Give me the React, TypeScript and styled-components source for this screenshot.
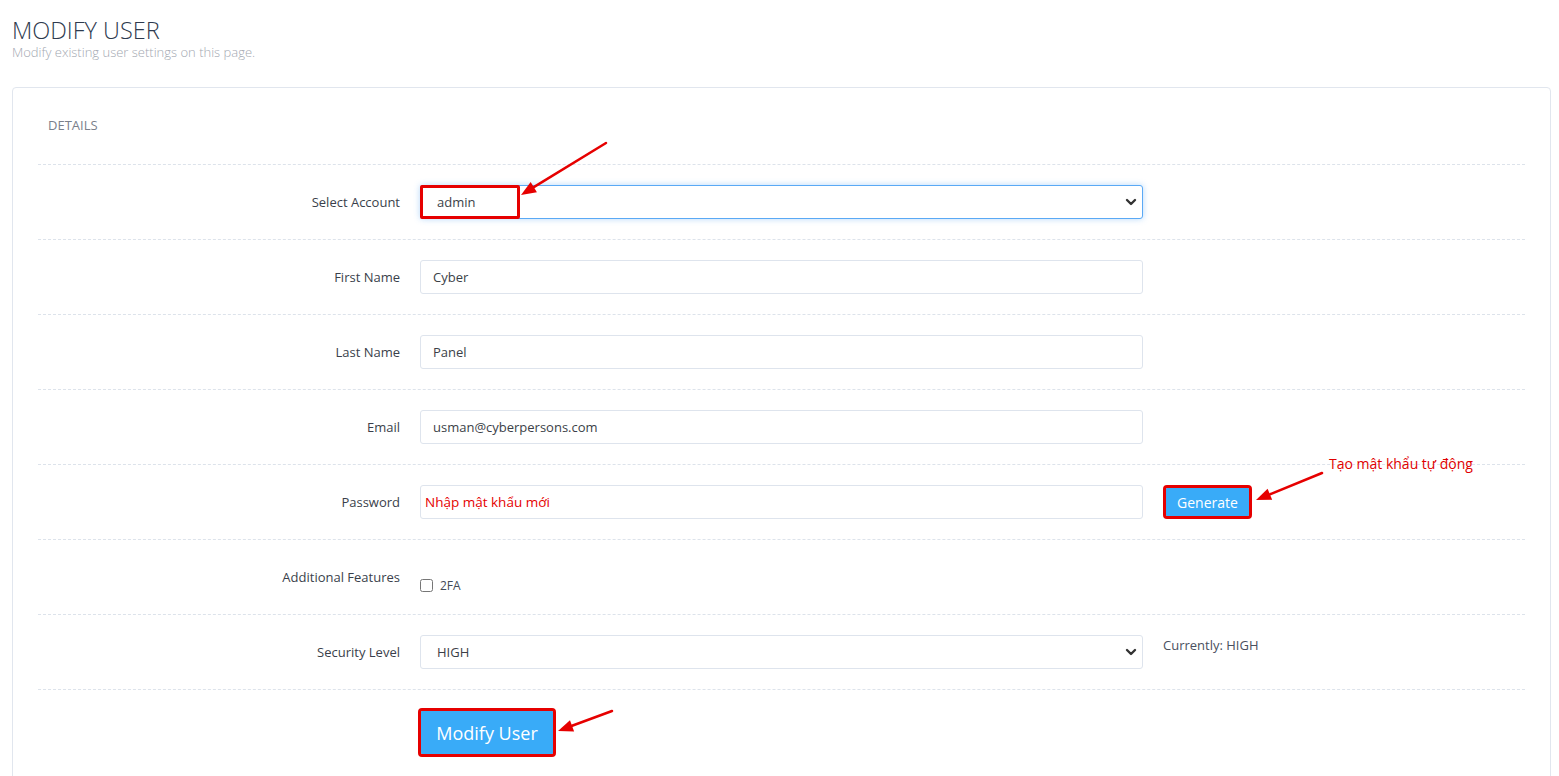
import React from "react";
import styled, { createGlobalStyle } from "styled-components";

const Global = createGlobalStyle`
  html, body { margin: 0; padding: 0; overflow: hidden; background: #fff; }
  body { font-family: "Open Sans", "Noto Sans", sans-serif; }
  * { box-sizing: border-box; }
`;

const Page = styled.div`
  position: relative;
  padding: 0 8px 0 12px;
  width: 1559px;
  height: 776px;
  overflow: hidden;
`;

const Header = styled.header`
  padding-top: 17px;
  height: 87px;
`;

const Title = styled.h1`
  margin: 0;
  font-family: "Open Sans", sans-serif;
  font-weight: 300;
  font-size: 23.5px;
  line-height: 27px;
  color: #2e3a4e;
`;

const Subtitle = styled.p`
  margin: 0;
  font-weight: 300;
  font-size: 13px;
  line-height: 16px;
  color: #a3a8b1;
`;

const Card = styled.section`
  border: 1px solid #e1e6ee;
  border-radius: 4px;
  padding: 0 25px 40px;
`;

const CardTitle = styled.div`
  padding: 29px 10px 31px;
  font-size: 13px;
  line-height: 16px;
  color: #7a808b;
  font-weight: 400;
`;

const Row = styled.div`
  display: grid;
  grid-template-columns: 362px 723px 1fr;
  column-gap: 20px;
  border-top: 1px dashed #dde3eb;
  padding: 20px 0;
  min-height: 75px;
`;

const Label = styled.label`
  text-align: right;
  font-size: 13px;
  font-weight: 500;
  line-height: 34px;
  color: #3a3f4b;
`;

const Field = styled.div`
  position: relative;
`;

const TextInput = styled.input<{ $annot?: boolean }>`
  width: 100%;
  height: 34px;
  border: 1px solid #dee4ed;
  border-radius: 3px;
  padding: 0 ${(p) => (p.$annot ? 4 : 12)}px;
  font-family: "Open Sans", sans-serif;
  font-size: ${(p) => (p.$annot ? 13.5 : 13)}px;
  color: ${(p) => (p.$annot ? "#e50000" : "#3b3f48")};
  outline: none;
  &::placeholder { color: #e50000; opacity: 1; }
`;

const SelectBox = styled.select<{ $focus?: boolean }>`
  width: 100%;
  height: 34px;
  appearance: none;
  border: 1px solid ${(p) => (p.$focus ? "#5aa9f5" : "#dee4ed")};
  box-shadow: ${(p) => (p.$focus ? "0 0 6px rgba(90,169,245,0.45)" : "none")};
  border-radius: 3px;
  padding: 0 16px;
  font-family: "Open Sans", sans-serif;
  font-size: 13px;
  color: #3b3f48;
  background: #fff;
  outline: none;
`;

const Chevron = styled.svg`
  position: absolute;
  right: 6px;
  top: 12px;
  pointer-events: none;
`;

const Highlight = styled.div<{ $w: number }>`
  position: absolute;
  left: 0;
  top: 0;
  width: ${(p) => p.$w}px;
  height: 34px;
  border: 3px solid #e60000;
  border-radius: 2px;
  pointer-events: none;
`;

const Side = styled.div`
  font-size: 13px;
  line-height: 20px;
  color: #4a5060;
`;

const Button = styled.button<{ $big?: boolean }>`
  background: #39abf8;
  color: #fff;
  border: none;
  border-radius: 1px;
  outline: 3px solid #e60000;
  font-family: "Open Sans", sans-serif;
  font-size: ${(p) => (p.$big ? 18 : 14)}px;
  width: ${(p) => (p.$big ? 132 : 83)}px;
  height: ${(p) => (p.$big ? 43 : 28)}px;
  margin: ${(p) => (p.$big ? "1px 0 0 1px" : "3px 0 0 3px")};
  padding: 0;
  cursor: pointer;
`;

const CheckWrap = styled.label`
  display: flex;
  align-items: center;
  gap: 7px;
  padding-top: 17px;
  font-size: 12px;
  color: #444a55;
`;

const Check = styled.input`
  margin: 0;
  width: 13px;
  height: 13px;
`;

const Annotation = styled.div`
  position: absolute;
  left: 1329px;
  top: 454px;
  font-size: 14px;
  color: #e00000;
  font-family: "Open Sans", "Noto Sans", sans-serif;
`;

const Overlay = styled.svg`
  position: absolute;
  left: 0;
  top: 0;
  pointer-events: none;
`;

const ChevronIcon = () => (
  <Chevron width="12" height="10" viewBox="0 0 12 10">
    <path d="M2 3 L6 7 L10 3" fill="none" stroke="#333" strokeWidth="2.4" strokeLinecap="round" strokeLinejoin="round" />
  </Chevron>
);

function Arrow({ x1, y1, x2, y2 }: { x1: number; y1: number; x2: number; y2: number }) {
  const ang = Math.atan2(y2 - y1, x2 - x1);
  const len = 15;
  const w = 6;
  const bx = x2 - len * Math.cos(ang);
  const by = y2 - len * Math.sin(ang);
  const px = -Math.sin(ang) * w;
  const py = Math.cos(ang) * w;
  return (
    <g>
      <line x1={x1} y1={y1} x2={bx} y2={by} stroke="#e60000" strokeWidth="2.5" strokeLinecap="round" />
      <polygon points={`${x2},${y2} ${bx + px},${by + py} ${bx - px},${by - py}`} fill="#e60000" />
    </g>
  );
}

export default function App() {
  return (
    <>
      <Global />
      <Page>
        <Header>
          <Title>MODIFY USER</Title>
          <Subtitle>Modify existing user settings on this page.</Subtitle>
        </Header>
        <Card>
          <CardTitle>DETAILS</CardTitle>
          <Row>
            <Label>Select Account</Label>
            <Field>
              <SelectBox $focus defaultValue="admin">
                <option value="admin">admin</option>
              </SelectBox>
              <ChevronIcon />
              <Highlight $w={100} />
            </Field>
            <div />
          </Row>
          <Row>
            <Label>First Name</Label>
            <Field>
              <TextInput defaultValue="Cyber" />
            </Field>
            <div />
          </Row>
          <Row>
            <Label>Last Name</Label>
            <Field>
              <TextInput defaultValue="Panel" />
            </Field>
            <div />
          </Row>
          <Row>
            <Label>Email</Label>
            <Field>
              <TextInput defaultValue="usman@cyberpersons.com" />
            </Field>
            <div />
          </Row>
          <Row>
            <Label>Password</Label>
            <Field>
              <TextInput $annot placeholder="Nhập mật khẩu mới" />
            </Field>
            <div>
              <Button>Generate</Button>
            </div>
          </Row>
          <Row>
            <Label>Additional Features</Label>
            <div>
              <CheckWrap>
                <Check type="checkbox" />
                2FA
              </CheckWrap>
            </div>
            <div />
          </Row>
          <Row>
            <Label>Security Level</Label>
            <Field>
              <SelectBox defaultValue="HIGH">
                <option value="HIGH">HIGH</option>
              </SelectBox>
              <ChevronIcon />
            </Field>
            <Side>Currently: HIGH</Side>
          </Row>
          <Row>
            <div />
            <div>
              <Button $big>Modify User</Button>
            </div>
            <div />
          </Row>
        </Card>
        <Annotation>Tạo mật khẩu tự động</Annotation>
        <Overlay width="1559" height="776">
          <Arrow x1={606} y1={143} x2={521} y2={195} />
          <Arrow x1={1322} y1={473} x2={1256} y2={500} />
          <Arrow x1={612} y1={711} x2={558} y2={731} />
        </Overlay>
      </Page>
    </>
  );
}
